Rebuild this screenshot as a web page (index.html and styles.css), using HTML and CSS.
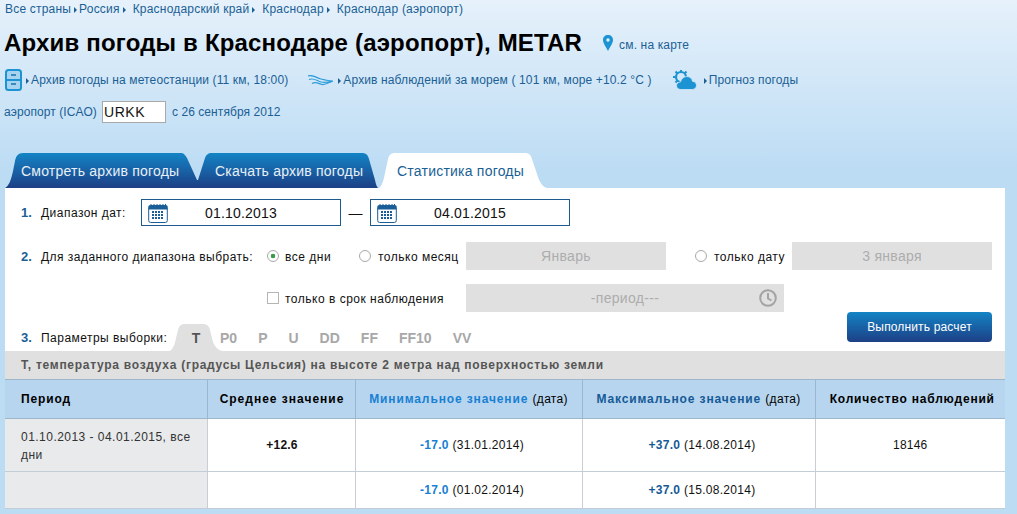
FILE: index.html
```html
<!DOCTYPE html>
<html lang="ru">
<head>
<meta charset="utf-8">
<title>Архив погоды в Краснодаре (аэропорт), METAR</title>
<link rel="stylesheet" href="styles.css">
</head>
<body>
<nav class="crumbs">
  <a>Все страны</a><i class="arr first"></i><a>Россия</a><i class="arr"></i><a>Краснодарский край</a><i class="arr"></i><a>Краснодар</a><i class="arr"></i><a>Краснодар (аэропорт)</a>
</nav>
<header class="title-row">
  <h1>Архив погоды в Краснодаре (аэропорт), METAR</h1>
  <svg class="pin" viewBox="0 0 10 16"><path d="M5 0C2 0 0 2 0 5c0 3 3 7 5 11 2-4 5-8 5-11 0-3-2-5-5-5z" fill="#1c93d3"/><circle cx="5" cy="5" r="1.7" fill="#e4f0fa"/></svg>
  <a class="map-link">см. на карте</a>
</header>
<div class="links">
  <svg class="ic-file" viewBox="0 0 17 22"><rect x="1" y="1" width="15" height="20" rx="2.5" fill="#a6d4f0" stroke="#1c93d3" stroke-width="2"/><path d="M1 11h15" stroke="#1c93d3" stroke-width="2"/><path d="M6 6h5M6 15h5" stroke="#1872a8" stroke-width="1.6"/></svg>
  <i class="arr a1"></i><a>Архив погоды на метеостанции (11 км, 18:00)</a>
  <svg class="ic-wave" viewBox="0 0 26 11"><path d="M0 1C5-1 8 3 13 4c4 1 8 2 12 2M1 4.500c5-2 8 1.500 12 2.500 4 1 8 0 12-1M4 8.500c4-2.500 7 .5 10 1 3 .5 6-1.500 11-3.500" fill="none" stroke="#2f9dd9" stroke-width="1.200"/></svg>
  <i class="arr a1"></i><a>Архив наблюдений за морем ( 101 км, море +10.2 °C )</a>
  <svg class="ic-cloud" viewBox="0 0 25 22"><circle cx="9" cy="8" r="5" fill="none" stroke="#1c93d3" stroke-width="2.200"/><path d="M9 1v2.500M3.500 2.500l2 2M1 8h2.500M14.500 2.500l-2 2M3.500 13.500l2-2" stroke="#1c93d3" stroke-width="2"/><path d="M9 20.500c-2.700 0-4.500-1.500-4.500-3.800S6.300 13 8.500 13c.8-3.200 3.200-5.500 6.300-5.500s5.300 2 5.700 4.800c2.500.2 4 2 4 4.200s-1.700 4-4.300 4z" fill="#1c93d3" stroke="#d6e9f8" stroke-width=".8"/></svg>
  <i class="arr a1 a3"></i><a>Прогноз погоды</a>
</div>
<div class="icao">
  <span>аэропорт (ICAO)</span>
  <span class="icao-input">URKK</span>
  <span>с 26 сентября 2012</span>
</div>
<div class="tabs">
  <div class="tab t1">Смотреть архив погоды</div>
  <div class="tab t2">Скачать архив погоды</div>
  <div class="tab t3">Статистика погоды</div>
</div>
<main class="panel">
  <div class="row r1">
    <b class="num">1.</b><span class="lab">Диапазон дат:</span>
    <div class="date">
      <svg class="cal" viewBox="0 0 20 20"><rect x=".7" y="2.500" width="18.600" height="17" rx="2" fill="#fff" stroke="#1a5e97"/><rect x=".7" y="2.500" width="18.600" height="4" fill="#1a5e97"/><path d="M3 1v3M6 1v3M9 1v3M12 1v3M15 1v3M17.500 1v3" stroke="#1a5e97"/><path d="M4 9h12M4 12h12M4 15h12" stroke="#1a5e97" stroke-width="1.800" stroke-dasharray="2 1"/></svg>
      <span>01.10.2013</span>
    </div>
    <span class="dash">—</span>
    <div class="date">
      <svg class="cal" viewBox="0 0 20 20"><rect x=".7" y="2.500" width="18.600" height="17" rx="2" fill="#fff" stroke="#1a5e97"/><rect x=".7" y="2.500" width="18.600" height="4" fill="#1a5e97"/><path d="M3 1v3M6 1v3M9 1v3M12 1v3M15 1v3M17.500 1v3" stroke="#1a5e97"/><path d="M4 9h12M4 12h12M4 15h12" stroke="#1a5e97" stroke-width="1.800" stroke-dasharray="2 1"/></svg>
      <span>04.01.2015</span>
    </div>
  </div>
  <div class="row r2">
    <b class="num">2.</b><span class="lab lab2">Для заданного диапазона выбрать:</span>
    <i class="radio on"></i><span class="opt o1">все дни</span>
    <i class="radio"></i><span class="opt o2">только месяц</span>
    <div class="sel s1">Январь</div>
    <i class="radio"></i><span class="opt o3">только дату</span>
    <div class="sel s2">3 января</div>
  </div>
  <div class="row r3">
    <i class="check"></i><span class="opt o4">только в срок наблюдения</span>
    <div class="sel s3">-период---
      <svg class="clock" viewBox="0 0 18 18"><circle cx="9" cy="9" r="7.800" fill="none" stroke="#a3a3a3" stroke-width="2"/><path d="M9 4v5.500l3.500 2" fill="none" stroke="#a3a3a3" stroke-width="2"/></svg>
    </div>
  </div>
  <div class="row r4">
    <b class="num">3.</b><span class="lab lab3">Параметры выборки:</span>
    <div class="ptab">T</div>
    <div class="plist"><span class="p">P0</span><span class="p">P</span><span class="p">U</span><span class="p">DD</span><span class="p">FF</span><span class="p">FF10</span><span class="p">VV</span></div>
    <button class="go">Выполнить расчет</button>
  </div>
  <div class="strip">Т, температура воздуха (градусы Цельсия) на высоте 2 метра над поверхностью земли</div>
  <table class="stats">
    <colgroup><col class="c1"><col class="c2"><col class="c3"><col class="c4"><col class="c5"></colgroup>
    <thead>
      <tr><th class="left">Период</th><th class="avg">Среднее значение</th><th><em class="lb">Минимальное значение</em> <span>(дата)</span></th><th><em class="db">Максимальное значение</em> <span>(дата)</span></th><th class="cnt">Количество наблюдений</th></tr>
    </thead>
    <tbody>
      <tr class="tr1"><td class="left">01.10.2013 - 04.01.2015, все дни</td><td class="v"><b>+12.6</b></td><td class="m"><b class="lb">-17.0</b> (31.01.2014)</td><td class="m"><b class="db">+37.0</b> (14.08.2014)</td><td>18146</td></tr>
      <tr class="tr2"><td class="left"></td><td></td><td class="m"><b class="lb">-17.0</b> (01.02.2014)</td><td class="m"><b class="db">+37.0</b> (15.08.2014)</td><td></td></tr>
    </tbody>
  </table>
</main>
</body>
</html>
```
FILE: styles.css
```css
* { box-sizing: border-box; }
html, body { margin: 0; padding: 0; }
body {
  width: 1017px;
  height: 514px;
  overflow: hidden;
  font-family: "Liberation Sans", Arial, sans-serif;
  font-size: 12px;
  color: #111;
  background: linear-gradient(#e6f1fb 0, #bcdcf4 170px, #bcdcf4 100%);
}
a { color: #1b5f95; }
.arr {
  display: inline-block;
  width: 0; height: 0;
  border-left: 3px solid #1b5f95;
  border-top: 3px solid transparent;
  border-bottom: 3px solid transparent;
}
.crumbs {
  display: flex;
  align-items: center;
  height: 18px;
  padding-left: 5px;
  letter-spacing: .2px;
}
.crumbs .arr { margin: 2px 7px 0 3px; }
.crumbs .arr.first { margin: 2px 2px 0 3px; }
.title-row {
  display: flex;
  align-items: center;
  height: 34px;
  margin-top: 8px;
  padding-left: 4px;
}
h1 { margin: 0; font-size: 24px; line-height: 34px; font-weight: bold; color: #000; letter-spacing: .18px; }
.pin { width: 10px; height: 16px; margin-left: 21px; }
.map-link { margin: 3px 0 0 6px; letter-spacing: .15px; }
.links {
  display: flex;
  align-items: center;
  height: 24px;
  margin-top: 8px;
  padding-left: 5px;
  letter-spacing: .13px;
}
.ic-file { width: 17px; height: 22px; }
.ic-wave { width: 26px; height: 11px; margin-left: 20px; }
.ic-cloud { width: 25px; height: 22px; margin-left: 20px; }
.links .a1 { margin: 2px 2px 0 4px; }
.links .a3 { margin-left: 7px; }
.icao {
  display: flex;
  align-items: center;
  height: 22px;
  margin-top: 9px;
  padding-left: 4px;
  color: #1b5f95;
  letter-spacing: .07px;
}
.icao-input {
  width: 64px;
  height: 22px;
  margin: 0 6px 0 5px;
  padding: 0 0 0 1px;
  border: 1px solid #a9a9a9;
  background: #fff;
  color: #111;
  font-size: 14px;
  line-height: 20px;
  letter-spacing: .6px;
}
.tabs {
  display: flex;
  height: 35px;
  margin: 30px 0 0 5px;
  font-size: 14px;
  letter-spacing: .22px;
}
.tab {
  display: flex;
  align-items: center;
  height: 35px;
  color: #e8f0f6;
  background: linear-gradient(#1384c5, #1d3f85);
}
.t1 {
  width: 193px;
  padding-left: 16px;
  clip-path: path("M0 35 C4 33 6 27 8 18 L10 8 C11 3 13 0 18 0 L176 0 C179 0 180 2 182 5 L192 27 L193 27 L193 35 Z");
}
.t2 {
  width: 180px;
  padding-left: 17px;
  clip-path: path("M0 35 L0 27 L7 5 C8 2 10 0 14 0 L164 0 C168 0 170 2 171 6 L177 27 C178 32 179 34 180 35 Z");
}
.t3 {
  width: 168px;
  margin-left: 1px;
  padding-left: 18px;
  color: #1b5f95;
  background: #fff;
  clip-path: path("M0 35 C3 33 5 26 6 20 L9 6 C10 2 12 0 16 0 L146 0 C150 0 152 2 153 6 L159 24 C161 30 164 34 168 35 Z");
}
.panel {
  width: 1000px;
  height: 321px;
  margin-left: 5px;
  padding-top: 12px;
  background: #fff;
}
.row { display: flex; align-items: center; }
.num { width: 20px; margin-left: 16px; color: #1b5f95; font-size: 13px; }
.lab { color: #111; letter-spacing: .47px; }
.r1 { height: 25px; }
.date {
  display: flex;
  align-items: center;
  width: 200px;
  height: 27px;
  padding-left: 6px;
  border: 1px solid #1d5a8e;
  font-size: 14px;
  letter-spacing: .2px;
}
.r1 .lab { width: 100px; }
.date span { flex: 1; text-align: center; padding-right: 26px; }
.cal { width: 20px; height: 20px; }
.dash { width: 29px; text-align: center; font-size: 14px; }
.r2 { height: 28px; margin-top: 17px; }
.lab2 { width: 226px; padding-top: 1px; }
.radio {
  width: 12px; height: 12px;
  border: 1px solid #a8a8a8;
  border-radius: 50%;
  background: #fff;
}
.radio.on { background: radial-gradient(circle, #3c9a4b 0 2px, #fff 2.600px); }
.opt { margin-left: 6px; padding-top: 1px; color: #111; letter-spacing: .5px; }
.o1 { width: 74px; }
.o2 { width: 88px; margin-left: 7px; }
.o3 { width: 78px; margin-left: 7px; }
.sel {
  display: flex;
  align-items: center;
  justify-content: center;
  height: 28px;
  background: #e0e0e0;
  color: #adadad;
  font-size: 14px;
  letter-spacing: .3px;
}
.s1 { width: 200px; margin-right: 29px; }
.s2 { width: 200px; }
.r3 { height: 28px; margin-top: 14px; padding-left: 262px; }
.check {
  width: 12px; height: 12px;
  border: 1px solid #b5b5b5;
  background: #fff;
}
.o4 { width: 181px; }
.s3 { width: 318px; position: relative; }
.clock { position: absolute; right: 7px; top: 5px; width: 18px; height: 18px; }
.r4 { height: 39px; align-items: flex-end; }
.r4 .num, .r4 .lab { padding-bottom: 6px; }
.lab3 { width: 129px; }
.ptab {
  width: 52px;
  height: 27px;
  padding-top: 6px;
  text-align: center;
  font-size: 14px;
  font-weight: bold;
  color: #555;
  background: #e0e0e0;
  clip-path: path("M0 27 C3 25 5 20 6 14 L8 6 C9 2 11 0 15 0 L33 0 C37 0 39 2 40 6 L43 18 C45 23 48 26 52 27 Z");
}
.plist {
  display: flex;
  gap: 21px;
  margin-left: -2px;
  padding-bottom: 5px;
  font-size: 14px;
  font-weight: bold;
  color: #a8a8a8;
}
.go {
  width: 145px;
  height: 30px;
  margin: 0 13px 9px auto;
  border: 0;
  border-radius: 4px;
  color: #fff;
  font: 12px "Liberation Sans", Arial, sans-serif;
  letter-spacing: .15px;
  background: linear-gradient(#1384c5, #1d3f85);
}
.strip {
  height: 28px;
  padding-left: 16px;
  background: #e0e0e0;
  color: #555;
  font-size: 12px;
  font-weight: bold;
  line-height: 28px;
  letter-spacing: .72px;
}
.stats {
  width: 1000px;
  table-layout: fixed;
  border-collapse: collapse;
}
.c1 { width: 202px; }
.c2 { width: 148px; }
.c3 { width: 227px; }
.c4 { width: 233px; }
.c5 { width: 190px; }
.stats th {
  height: 39px;
  padding: 0;
  background: #b7d5ee;
  border-top: 1px solid #9cb7cc;
  border-left: 1px solid #9cb7cc;
  border-bottom: 1px solid #9cb7cc;
  color: #000;
  font-size: 12px;
  letter-spacing: .88px;
}
.stats th.avg { padding-left: 2px; letter-spacing: 1px; }
.stats th.cnt { padding-left: 4px; letter-spacing: .8px; }
.stats th span { font-weight: normal; letter-spacing: .3px; }
.stats em { font-style: normal; }
.lb { color: #1780d4; }
.db { color: #155a97; }
.stats td {
  padding: 0;
  text-align: center;
  letter-spacing: .2px;
  border-left: 1px solid #c8ced3;
  border-bottom: 1px solid #c3cdd6;
}
.stats td.m { padding-left: 7px; letter-spacing: .3px; }
.stats td.v { padding-left: 2px; }
.tr1 td { height: 53px; }
.tr2 td { height: 37px; }
.stats .left {
  padding-left: 16px;
  text-align: left;
  border-left: 0;
}
.stats td.left { background: #e8eaec; padding: 2px 10px 0 16px; line-height: 18px; color: #333; letter-spacing: .47px; }
```
